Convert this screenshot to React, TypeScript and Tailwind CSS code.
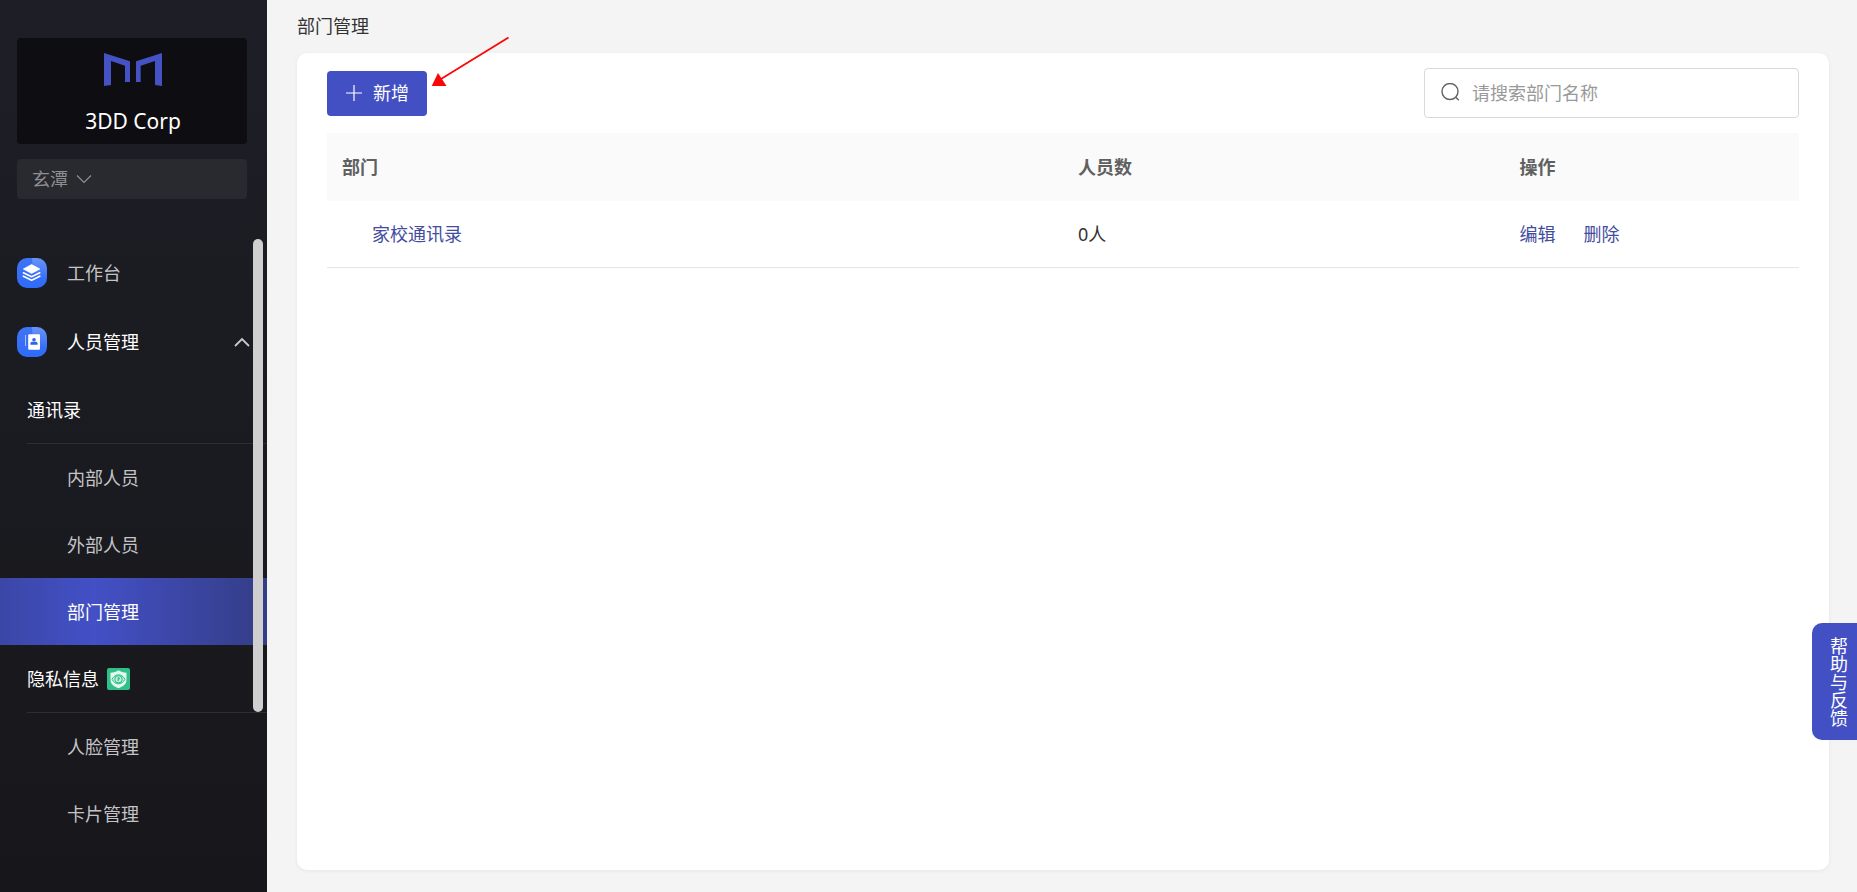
import React, { useState } from 'react';

interface Department {
  id: number;
  name: string;
  count: number;
}

interface MenuSection {
  title: string;
  secure?: boolean;
  items: string[];
}

const departments: Department[] = [{ id: 1, name: '家校通讯录', count: 0 }];

const sections: MenuSection[] = [
  { title: '通讯录', items: ['内部人员', '外部人员', '部门管理'] },
  { title: '隐私信息', secure: true, items: ['人脸管理', '卡片管理'] },
];

function Logo() {
  return (
    <svg viewBox="0 0 174 99" className="w-[58px] h-[33px]" fill="#4552c4" aria-hidden="true">
      <path d="M0 0 78 25V87H63V38L21 24V96L0 99Z" />
      <path d="M174 0 96 25V87H110V38L153 24V96L174 99Z" />
    </svg>
  );
}

function IconTile({ id, children }: { id: string; children: React.ReactNode }) {
  return (
    <svg viewBox="0 0 30 30" className="w-[30px] h-[30px] shrink-0" aria-hidden="true">
      <defs>
        <linearGradient id={id} x1="0" y1="0" x2="0" y2="1">
          <stop offset="0" stopColor="#3f74f4" />
          <stop offset="1" stopColor="#2f6bfa" />
        </linearGradient>
        <linearGradient id={`${id}-shine`} x1="0" y1="0" x2="0" y2="1">
          <stop offset="0" stopColor="#fff" stopOpacity="0.22" />
          <stop offset="1" stopColor="#fff" stopOpacity="0" />
        </linearGradient>
      </defs>
      <rect width="30" height="30" rx="10" fill={`url(#${id})`} />
      <path d="M15 0h5a10 10 0 0 1 10 10v12C21 21 15 14 15 0Z" fill={`url(#${id}-shine)`} />
      {children}
    </svg>
  );
}

function LayersIcon() {
  return (
    <IconTile id="tile-layers">
      <path d="M14.6 6.6 22.8 11 14.6 15.400 6.400 11Z" fill="#fff" stroke="#fff" strokeWidth="0.8" strokeLinejoin="round" />
      <path d="m6.400 14.800 8.200 4 8.200-4M6.400 18.200l8.200 4 8.200-4" fill="none" stroke="#fff" strokeWidth="1.600" strokeLinejoin="round" strokeLinecap="round" />
    </IconTile>
  );
}

function ContactsIcon() {
  return (
    <IconTile id="tile-contacts">
      <path d="M8.500 8v11" stroke="#fff" strokeOpacity="0.55" strokeWidth="1" />
      <rect x="11.2" y="7.2" width="11.8" height="15.6" rx="1" fill="#fff" />
      <circle cx="17" cy="12.8" r="1.8" fill="#2f63e8" />
      <path d="M13.400 17.800v-1.200c0-1.300 1-1.900 2.200-1.900h2.800c1.200 0 2.200.6 2.200 1.900v1.200Z" fill="#2f63e8" />
    </IconTile>
  );
}

function ShieldBadge() {
  return (
    <svg viewBox="0 0 23 22" className="w-[23px] h-[22px]" aria-hidden="true">
      <rect width="23" height="22" rx="2" fill="#2fc08a" />
      <path d="M11.500 2.200c2.200 1.700 5 2.300 8 2.500v7.300c0 4.200-3.400 6.500-8 8.300-4.600-1.800-8-4.100-8-8.300V4.700c3-.2 5.800-.8 8-2.500Z" fill="#e4f8ee" />
      <path d="M5 11.300c1.700-3 3.900-4.500 6.500-4.500s4.800 1.500 6.500 4.500c-1.700 3-3.900 4.500-6.500 4.500S6.700 14.300 5 11.300Z" fill="#c9f0de" stroke="#2fc08a" strokeWidth="1" />
      <circle cx="11.5" cy="11.3" r="3.600" fill="none" stroke="#2fc08a" strokeWidth="1.100" />
      <path d="M11.200 9.300v4" stroke="#2fc08a" strokeWidth="1.200" />
      <circle cx="12" cy="10.500" r="1" fill="#2fc08a" />
    </svg>
  );
}

function Sidebar() {
  const [open, setOpen] = useState(true);
  const active = '部门管理';

  return (
    <aside className="w-[267px] shrink-0 flex flex-col overflow-hidden bg-linear-to-b from-[#1e1e27] via-[#1a1b20] to-[#17161b]">
      {/* Company */}
      <div className="mt-[38px] ml-[17px] mr-5 h-[106px] shrink-0 rounded bg-[#0e0e12] flex flex-col items-center pt-[15px] pl-0.5">
        <Logo />
        <div className="mt-[21px] text-[21px] leading-7 text-white">3DD Corp</div>
      </div>

      <label className="mt-[15px] ml-[17px] mr-5 h-10 shrink-0 rounded bg-[#292930] flex items-center gap-2 px-[15px] text-[#8e8e93]">
        <select aria-label="当前账号" className="appearance-none bg-transparent outline-none [field-sizing:content]">
          <option>玄潭</option>
        </select>
        <svg viewBox="0 0 16 10" className="w-4 h-[10px]" fill="none" stroke="currentColor" strokeWidth="1.200" aria-hidden="true">
          <path d="m1 1.500 7 7 7-7" />
        </svg>
      </label>

      {/* Menu */}
      <div className="relative mt-[39px] flex-1 min-h-0">
        <nav className="h-full overflow-hidden text-[#c4c4c7]">
          <a href="#workbench" className="h-[69px] pl-[17px] flex items-center gap-5">
            <LayersIcon />
            工作台
          </a>
          <button
            type="button"
            aria-expanded={open}
            onClick={() => setOpen(!open)}
            className="w-full h-[69px] pl-[17px] pr-[17px] flex items-center gap-5 text-white"
          >
            <ContactsIcon />
            人员管理
            <svg viewBox="0 0 16 10" className="ml-auto w-4 h-[10px]" fill="none" stroke="#c9c9cc" strokeWidth="1.800" aria-hidden="true">
              <path d="M1 9 8 2l7 7" />
            </svg>
          </button>

          {open &&
            sections.map((section) => (
              <div key={section.title}>
                <h3 className="ml-[27px] h-[68px] border-b border-[#2d2d33] flex items-center gap-2 text-white">
                  {section.title}
                  {section.secure && <ShieldBadge />}
                </h3>
                {section.items.map((item) => (
                  <a
                    key={item}
                    href="#menu"
                    className={
                      item === active
                        ? 'h-[67px] pl-[67px] flex items-center text-white bg-linear-to-r from-[#3b47a6] via-[#4350c6] via-35% to-[#343d86]'
                        : 'h-[67px] pl-[67px] flex items-center'
                    }
                  >
                    {item}
                  </a>
                ))}
              </div>
            ))}
        </nav>
        <div className="absolute top-px right-1 w-[10px] h-[473px] rounded-full bg-[#cfcfcf]" />
      </div>
    </aside>
  );
}

function DepartmentTable({ rows }: { rows: Department[] }) {
  return (
    <table className="mt-[15px] w-full table-fixed text-left">
      <thead>
        <tr className="h-[68px] bg-[#fafafa] text-[#606060]">
          <th className="w-1/2 px-[15px] font-bold">部门</th>
          <th className="w-[30%] px-[15px] font-bold">人员数</th>
          <th className="w-1/5 px-[15px] font-bold">操作</th>
        </tr>
      </thead>
      <tbody>
        {rows.map((row) => (
          <tr key={row.id} className="h-[66px] border-b border-[#e6e6e6]">
            <td className="pl-[45px]">
              <a href="#department" className="text-[#434da0]">{row.name}</a>
            </td>
            <td className="px-[15px] text-[#333333]">{row.count}人</td>
            <td className="px-[15px]">
              <div className="flex gap-7 text-[#434da0]">
                <button type="button">编辑</button>
                <button type="button">删除</button>
              </div>
            </td>
          </tr>
        ))}
      </tbody>
    </table>
  );
}

export default function App() {
  const [keyword, setKeyword] = useState('');
  const rows = departments.filter((d) => d.name.includes(keyword));

  return (
    <div className="relative flex h-screen overflow-hidden bg-[#f4f4f4] text-[18px] leading-6 font-['Noto_Sans','Noto_Sans_CJK_SC',sans-serif]">
      <Sidebar />

      <main className="flex-1 min-w-0 flex flex-col pl-[30px] pr-7 pb-[22px]">
        <h1 className="h-[53px] pb-0.5 flex items-center text-[#333333]">部门管理</h1>

        <section className="flex-1 min-h-0 rounded-[10px] bg-white px-[30px] pt-[15px] shadow-[0_1px_4px_rgba(0,0,0,0.06)]">
          {/* Toolbar */}
          <div className="flex items-center justify-between">
            <div className="relative">
              <button type="button" className="h-[45px] px-[18px] rounded bg-[#4350c4] flex items-center gap-[10px] text-white">
                <svg viewBox="0 0 18 18" className="w-[18px] h-[18px]" stroke="currentColor" strokeWidth="1.200" aria-hidden="true">
                  <path d="M9 1v16M1 9h16" />
                </svg>
                新增
              </button>
              <svg viewBox="0 0 80 52" className="absolute left-full bottom-7 ml-1 w-20 h-[52px] pointer-events-none" aria-hidden="true">
                <path d="M77.500 1.500 10 43" stroke="#fb0606" strokeWidth="1.800" />
                <path d="M.7 50 7 37l8.500 13Z" fill="#fb0606" />
              </svg>
            </div>

            <label className="w-[375px] h-[50px] rounded border border-[#d9d9d9] flex items-center gap-3 px-[15px]">
              <svg viewBox="0 0 20 20" className="w-5 h-5 shrink-0" fill="none" stroke="#606266" strokeWidth="1.400" aria-hidden="true">
                <circle cx="10" cy="8.500" r="8" />
                <path d="m15.500 14 3.300 3.300" />
              </svg>
              <input
                type="text"
                aria-label="搜索部门"
                value={keyword}
                onChange={(e) => setKeyword(e.target.value)}
                placeholder="请搜索部门名称"
                className="flex-1 min-w-0 bg-transparent outline-none placeholder:text-[#999999]"
              />
            </label>
          </div>

          <DepartmentTable rows={rows} />
        </section>
      </main>

      {/* Help tab on the window edge */}
      <button
        type="button"
        className="absolute right-0 bottom-[152px] w-[45px] h-[117px] pl-[18px] pr-[9px] rounded-l-[10px] bg-[#4350c4] text-white leading-[18px]"
      >
        帮助与反馈
      </button>
    </div>
  );
}
